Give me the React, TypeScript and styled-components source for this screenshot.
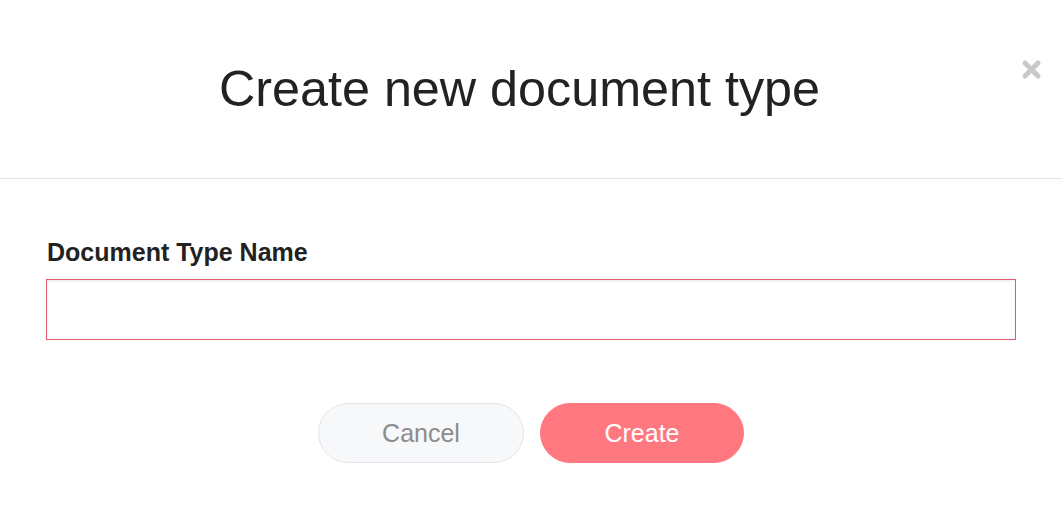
import * as React from "react";
import styled, { createGlobalStyle } from "styled-components";

const GlobalStyle = createGlobalStyle`
  html, body {
    margin: 0;
    padding: 0;
    background: #fff;
  }
  body {
    font-family: "Liberation Sans", Arial, sans-serif;
    color: #222;
  }
`;

const Modal = styled.div`
  width: 1062px;
  height: 505px;
  background: #fff;
  display: flex;
  flex-direction: column;
`;

const Header = styled.div`
  position: relative;
  height: 179px;
  border-bottom: 1px solid #e3e3e3;
  display: flex;
  align-items: center;
  justify-content: center;
  box-sizing: border-box;
  padding: 0 23px 2px 0;
`;

const Title = styled.h1`
  margin: 0;
  font-size: 50.3px;
  font-weight: 400;
  color: #222;
`;

const Close = styled.button`
  position: absolute;
  top: 59px;
  right: 20px;
  width: 21px;
  height: 21px;
  padding: 0;
  border: none;
  background: none;
  cursor: pointer;
  svg {
    display: block;
  }
`;

const Body = styled.div`
  padding: 58px 46px 0;
  display: flex;
  flex-direction: column;
`;

const Label = styled.label`
  font-size: 25px;
  line-height: 30px;
  font-weight: 700;
  color: #222;
  margin-left: 1px;
`;

const Input = styled.input`
  margin-top: 12px;
  width: 970px;
  height: 61px;
  box-sizing: border-box;
  border: 1px solid #e05869;
  box-shadow: inset 0 2px 2px rgba(0, 0, 0, 0.06);
  outline: none;
  font-size: 22px;
  padding: 0 14px;
  font-family: inherit;
`;

const Actions = styled.div`
  display: flex;
  justify-content: center;
  gap: 16px;
  margin-top: 63px;
`;

const Button = styled.button<{ $primary?: boolean }>`
  height: 60px;
  width: ${(p) => (p.$primary ? "204px" : "206px")};
  border-radius: 30px;
  font-family: "Liberation Sans", Arial, sans-serif;
  font-size: 25px;
  cursor: pointer;
  background: ${(p) => (p.$primary ? "#ff7880" : "#f7f8fa")};
  color: ${(p) => (p.$primary ? "#fff" : "#8c8c8c")};
  border: 1px solid ${(p) => (p.$primary ? "#ff7880" : "#e3e5e8")};
`;

export default function App() {
  return (
    <>
      <GlobalStyle />
      <Modal>
        <Header>
          <Title>Create new document type</Title>
          <Close aria-label="Close">
            <svg width="21" height="21" viewBox="0 0 21 21">
              <path
                d="M4 4 L17 17 M17 4 L4 17"
                stroke="#c9c9c9"
                strokeWidth="5"
                strokeLinecap="round"
              />
            </svg>
          </Close>
        </Header>
        <Body>
          <Label htmlFor="doc-type-name">Document Type Name</Label>
          <Input id="doc-type-name" type="text" />
          <Actions>
            <Button>Cancel</Button>
            <Button $primary>Create</Button>
          </Actions>
        </Body>
      </Modal>
    </>
  );
}
